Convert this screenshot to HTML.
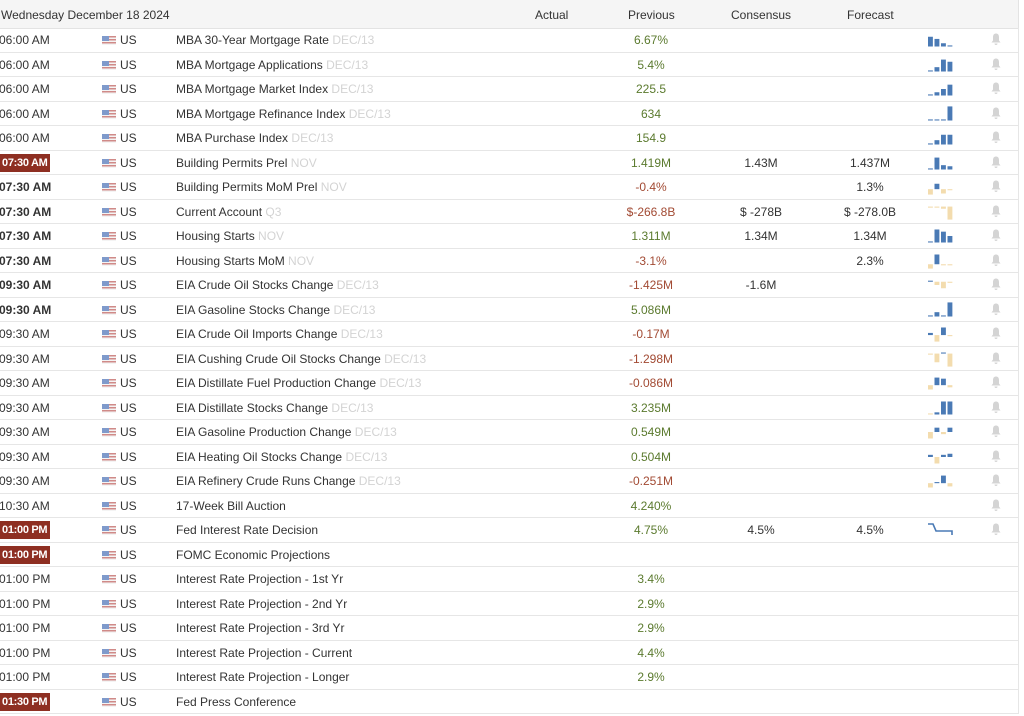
<!DOCTYPE html>
<html><head><meta charset="utf-8"><style>
*{margin:0;padding:0;box-sizing:border-box}
body{width:1024px;height:716px;background:#fff;font-family:"Liberation Sans",Arial,sans-serif;font-size:12px;color:#333;overflow:hidden;position:relative}
.hd{position:absolute;left:0;top:0;width:1019px;height:29px;background:#f5f5f5;border-bottom:1px solid #e3e3e3;border-right:1px solid #e3e3e3}
.hd span{position:absolute;top:8px;font-size:12px;color:#333}
.r{position:absolute;left:0;width:1019px;height:24.5px;border-bottom:1px solid #e6e6e6;border-right:1px solid #e6e6e6}
.r>*{position:absolute;top:5px;white-space:nowrap}
.t{left:-1px}
.b{font-weight:bold}
.bd{left:0;top:3px!important;width:50px;height:18px;background:#8e2f22;color:#fff;font-weight:bold;padding:3px 0 0 2px;font-size:11px;letter-spacing:-0.3px;overflow:hidden}
.f{left:102px;top:8px!important;width:14px;height:9px;background:linear-gradient(#d08a88 0 1.5px,#f4f4f4 1.5px 3px,#d08a88 3px 4.5px,#f4f4f4 4.5px 6px,#d08a88 6px 7.5px,#f4f4f4 7.5px 9px)}
.f:before{content:"";position:absolute;left:0;top:0;width:7px;height:5px;background:#7f9acb}
.us{left:120px}
.ev{left:176px}
.ev i{font-style:normal;color:#d3d3d3}
.c{transform:translateX(-50%)}
.p{left:651px}.cn{left:761px}.fc{left:870px}
.g{color:#5b7a2e}.n{color:#a24a33}
svg.ch{position:absolute;left:928px;top:1px}
.bell{left:990px;top:4px!important;width:12px;height:14px}
</style></head><body>
<div class="hd"><span style="left:1px">Wednesday December 18 2024</span><span style="left:535px">Actual</span><span style="left:628px">Previous</span><span style="left:731px">Consensus</span><span style="left:847px">Forecast</span></div>

<div class="r" style="top:28px"><span class="t">06:00 AM</span><span class="f"></span><span class="us">US</span><span class="ev">MBA 30-Year Mortgage Rate <i>DEC/13</i></span><span class="p c g">6.67%</span><svg class="ch" width="26" height="22" viewBox="0 0 24 20"><rect x="0" y="7" width="4.5" height="9" fill="#4a7ab5"/><rect x="6" y="9" width="4.5" height="7" fill="#4a7ab5"/><rect x="12" y="13" width="4.5" height="3" fill="#4a7ab5"/><rect x="18" y="15" width="4.5" height="1" fill="#4a7ab5"/></svg><svg class="bell" viewBox="0 0 12 13"><path d="M6 1C3.5 1 3 3 3 5v3L1.5 10h9L9 8V5C9 3 8.5 1 6 1zM4.5 11a1.5 1.5 0 003 0z" fill="#d4d4d4"/></svg></div>
<div class="r" style="top:52.5px"><span class="t">06:00 AM</span><span class="f"></span><span class="us">US</span><span class="ev">MBA Mortgage Applications <i>DEC/13</i></span><span class="p c g">5.4%</span><svg class="ch" width="26" height="22" viewBox="0 0 24 20"><rect x="0" y="15" width="4.5" height="1" fill="#4a7ab5"/><rect x="6" y="12" width="4.5" height="4" fill="#4a7ab5"/><rect x="12" y="5" width="4.5" height="11" fill="#4a7ab5"/><rect x="18" y="7" width="4.5" height="9" fill="#4a7ab5"/></svg><svg class="bell" viewBox="0 0 12 13"><path d="M6 1C3.5 1 3 3 3 5v3L1.5 10h9L9 8V5C9 3 8.5 1 6 1zM4.5 11a1.5 1.5 0 003 0z" fill="#d4d4d4"/></svg></div>
<div class="r" style="top:77px"><span class="t">06:00 AM</span><span class="f"></span><span class="us">US</span><span class="ev">MBA Mortgage Market Index <i>DEC/13</i></span><span class="p c g">225.5</span><svg class="ch" width="26" height="22" viewBox="0 0 24 20"><rect x="0" y="15" width="4.5" height="1" fill="#4a7ab5"/><rect x="6" y="13" width="4.5" height="3" fill="#4a7ab5"/><rect x="12" y="10" width="4.5" height="6" fill="#4a7ab5"/><rect x="18" y="6" width="4.5" height="10" fill="#4a7ab5"/></svg><svg class="bell" viewBox="0 0 12 13"><path d="M6 1C3.5 1 3 3 3 5v3L1.5 10h9L9 8V5C9 3 8.5 1 6 1zM4.5 11a1.5 1.5 0 003 0z" fill="#d4d4d4"/></svg></div>
<div class="r" style="top:101.5px"><span class="t">06:00 AM</span><span class="f"></span><span class="us">US</span><span class="ev">MBA Mortgage Refinance Index <i>DEC/13</i></span><span class="p c g">634</span><svg class="ch" width="26" height="22" viewBox="0 0 24 20"><rect x="0" y="15" width="4.5" height="1" fill="#4a7ab5"/><rect x="6" y="15" width="4.5" height="1" fill="#4a7ab5"/><rect x="12" y="15" width="4.5" height="1" fill="#4a7ab5"/><rect x="18" y="3" width="4.5" height="13" fill="#4a7ab5"/></svg><svg class="bell" viewBox="0 0 12 13"><path d="M6 1C3.5 1 3 3 3 5v3L1.5 10h9L9 8V5C9 3 8.5 1 6 1zM4.5 11a1.5 1.5 0 003 0z" fill="#d4d4d4"/></svg></div>
<div class="r" style="top:126px"><span class="t">06:00 AM</span><span class="f"></span><span class="us">US</span><span class="ev">MBA Purchase Index <i>DEC/13</i></span><span class="p c g">154.9</span><svg class="ch" width="26" height="22" viewBox="0 0 24 20"><rect x="0" y="15" width="4.5" height="1" fill="#4a7ab5"/><rect x="6" y="12" width="4.5" height="4" fill="#4a7ab5"/><rect x="12" y="7" width="4.5" height="9" fill="#4a7ab5"/><rect x="18" y="7" width="4.5" height="9" fill="#4a7ab5"/></svg><svg class="bell" viewBox="0 0 12 13"><path d="M6 1C3.5 1 3 3 3 5v3L1.5 10h9L9 8V5C9 3 8.5 1 6 1zM4.5 11a1.5 1.5 0 003 0z" fill="#d4d4d4"/></svg></div>
<div class="r" style="top:150.5px"><span class="bd">07:30 AM</span><span class="f"></span><span class="us">US</span><span class="ev">Building Permits Prel <i>NOV</i></span><span class="p c g">1.419M</span><span class="cn c">1.43M</span><span class="fc c">1.437M</span><svg class="ch" width="26" height="22" viewBox="0 0 24 20"><rect x="0" y="15" width="4.5" height="1" fill="#4a7ab5"/><rect x="6" y="5" width="4.5" height="11" fill="#4a7ab5"/><rect x="12" y="12" width="4.5" height="4" fill="#4a7ab5"/><rect x="18" y="13" width="4.5" height="3" fill="#4a7ab5"/></svg><svg class="bell" viewBox="0 0 12 13"><path d="M6 1C3.5 1 3 3 3 5v3L1.5 10h9L9 8V5C9 3 8.5 1 6 1zM4.5 11a1.5 1.5 0 003 0z" fill="#d4d4d4"/></svg></div>
<div class="r" style="top:175px"><span class="t b">07:30 AM</span><span class="f"></span><span class="us">US</span><span class="ev">Building Permits MoM Prel <i>NOV</i></span><span class="p c n">-0.4%</span><span class="fc c">1.3%</span><svg class="ch" width="26" height="22" viewBox="0 0 24 20"><rect x="0" y="12" width="4.5" height="5" fill="#f3dcae"/><rect x="6" y="7" width="4.5" height="5" fill="#4a7ab5"/><rect x="12" y="12" width="4.5" height="4" fill="#f3dcae"/><rect x="18" y="12" width="4.5" height="1" fill="#f3dcae"/></svg><svg class="bell" viewBox="0 0 12 13"><path d="M6 1C3.5 1 3 3 3 5v3L1.5 10h9L9 8V5C9 3 8.5 1 6 1zM4.5 11a1.5 1.5 0 003 0z" fill="#d4d4d4"/></svg></div>
<div class="r" style="top:199.5px"><span class="t b">07:30 AM</span><span class="f"></span><span class="us">US</span><span class="ev">Current Account <i>Q3</i></span><span class="p c n">$-266.8B</span><span class="cn c">$ -278B</span><span class="fc c">$ -278.0B</span><svg class="ch" width="26" height="22" viewBox="0 0 24 20"><rect x="0" y="5" width="4.5" height="1" fill="#f3dcae"/><rect x="6" y="5" width="4.5" height="1" fill="#f3dcae"/><rect x="12" y="5" width="4.5" height="2" fill="#f3dcae"/><rect x="18" y="5" width="4.5" height="12" fill="#f3dcae"/></svg><svg class="bell" viewBox="0 0 12 13"><path d="M6 1C3.5 1 3 3 3 5v3L1.5 10h9L9 8V5C9 3 8.5 1 6 1zM4.5 11a1.5 1.5 0 003 0z" fill="#d4d4d4"/></svg></div>
<div class="r" style="top:224px"><span class="t b">07:30 AM</span><span class="f"></span><span class="us">US</span><span class="ev">Housing Starts <i>NOV</i></span><span class="p c g">1.311M</span><span class="cn c">1.34M</span><span class="fc c">1.34M</span><svg class="ch" width="26" height="22" viewBox="0 0 24 20"><rect x="0" y="15" width="4.5" height="1" fill="#4a7ab5"/><rect x="6" y="4" width="4.5" height="12" fill="#4a7ab5"/><rect x="12" y="6" width="4.5" height="10" fill="#4a7ab5"/><rect x="18" y="10" width="4.5" height="6" fill="#4a7ab5"/></svg><svg class="bell" viewBox="0 0 12 13"><path d="M6 1C3.5 1 3 3 3 5v3L1.5 10h9L9 8V5C9 3 8.5 1 6 1zM4.5 11a1.5 1.5 0 003 0z" fill="#d4d4d4"/></svg></div>
<div class="r" style="top:248.5px"><span class="t b">07:30 AM</span><span class="f"></span><span class="us">US</span><span class="ev">Housing Starts MoM <i>NOV</i></span><span class="p c n">-3.1%</span><span class="fc c">2.3%</span><svg class="ch" width="26" height="22" viewBox="0 0 24 20"><rect x="0" y="13" width="4.5" height="4" fill="#f3dcae"/><rect x="6" y="4" width="4.5" height="9" fill="#4a7ab5"/><rect x="12" y="13" width="4.5" height="1" fill="#f3dcae"/><rect x="18" y="13" width="4.5" height="1" fill="#f3dcae"/></svg><svg class="bell" viewBox="0 0 12 13"><path d="M6 1C3.5 1 3 3 3 5v3L1.5 10h9L9 8V5C9 3 8.5 1 6 1zM4.5 11a1.5 1.5 0 003 0z" fill="#d4d4d4"/></svg></div>
<div class="r" style="top:273px"><span class="t b">09:30 AM</span><span class="f"></span><span class="us">US</span><span class="ev">EIA Crude Oil Stocks Change <i>DEC/13</i></span><span class="p c n">-1.425M</span><span class="cn c">-1.6M</span><svg class="ch" width="26" height="22" viewBox="0 0 24 20"><rect x="0" y="6" width="4.5" height="1" fill="#4a7ab5"/><rect x="6" y="7" width="4.5" height="3" fill="#f3dcae"/><rect x="12" y="7" width="4.5" height="6" fill="#f3dcae"/><rect x="18" y="7" width="4.5" height="1" fill="#f3dcae"/></svg><svg class="bell" viewBox="0 0 12 13"><path d="M6 1C3.5 1 3 3 3 5v3L1.5 10h9L9 8V5C9 3 8.5 1 6 1zM4.5 11a1.5 1.5 0 003 0z" fill="#d4d4d4"/></svg></div>
<div class="r" style="top:297.5px"><span class="t b">09:30 AM</span><span class="f"></span><span class="us">US</span><span class="ev">EIA Gasoline Stocks Change <i>DEC/13</i></span><span class="p c g">5.086M</span><svg class="ch" width="26" height="22" viewBox="0 0 24 20"><rect x="0" y="15" width="4.5" height="1" fill="#4a7ab5"/><rect x="6" y="12" width="4.5" height="4" fill="#4a7ab5"/><rect x="12" y="15" width="4.5" height="1" fill="#4a7ab5"/><rect x="18" y="3" width="4.5" height="13" fill="#4a7ab5"/></svg><svg class="bell" viewBox="0 0 12 13"><path d="M6 1C3.5 1 3 3 3 5v3L1.5 10h9L9 8V5C9 3 8.5 1 6 1zM4.5 11a1.5 1.5 0 003 0z" fill="#d4d4d4"/></svg></div>
<div class="r" style="top:322px"><span class="t">09:30 AM</span><span class="f"></span><span class="us">US</span><span class="ev">EIA Crude Oil Imports Change <i>DEC/13</i></span><span class="p c n">-0.17M</span><svg class="ch" width="26" height="22" viewBox="0 0 24 20"><rect x="0" y="9" width="4.5" height="2" fill="#4a7ab5"/><rect x="6" y="11" width="4.5" height="6" fill="#f3dcae"/><rect x="12" y="4" width="4.5" height="7" fill="#4a7ab5"/><rect x="18" y="11" width="4.5" height="1" fill="#f3dcae"/></svg><svg class="bell" viewBox="0 0 12 13"><path d="M6 1C3.5 1 3 3 3 5v3L1.5 10h9L9 8V5C9 3 8.5 1 6 1zM4.5 11a1.5 1.5 0 003 0z" fill="#d4d4d4"/></svg></div>
<div class="r" style="top:346.5px"><span class="t">09:30 AM</span><span class="f"></span><span class="us">US</span><span class="ev">EIA Cushing Crude Oil Stocks Change <i>DEC/13</i></span><span class="p c n">-1.298M</span><svg class="ch" width="26" height="22" viewBox="0 0 24 20"><rect x="0" y="5" width="4.5" height="1" fill="#f3dcae"/><rect x="6" y="5" width="4.5" height="8" fill="#f3dcae"/><rect x="12" y="4" width="4.5" height="1" fill="#4a7ab5"/><rect x="18" y="5" width="4.5" height="12" fill="#f3dcae"/></svg><svg class="bell" viewBox="0 0 12 13"><path d="M6 1C3.5 1 3 3 3 5v3L1.5 10h9L9 8V5C9 3 8.5 1 6 1zM4.5 11a1.5 1.5 0 003 0z" fill="#d4d4d4"/></svg></div>
<div class="r" style="top:371px"><span class="t">09:30 AM</span><span class="f"></span><span class="us">US</span><span class="ev">EIA Distillate Fuel Production Change <i>DEC/13</i></span><span class="p c n">-0.086M</span><svg class="ch" width="26" height="22" viewBox="0 0 24 20"><rect x="0" y="12" width="4.5" height="4" fill="#f3dcae"/><rect x="6" y="5" width="4.5" height="7" fill="#4a7ab5"/><rect x="12" y="6" width="4.5" height="6" fill="#4a7ab5"/><rect x="18" y="12" width="4.5" height="2" fill="#f3dcae"/></svg><svg class="bell" viewBox="0 0 12 13"><path d="M6 1C3.5 1 3 3 3 5v3L1.5 10h9L9 8V5C9 3 8.5 1 6 1zM4.5 11a1.5 1.5 0 003 0z" fill="#d4d4d4"/></svg></div>
<div class="r" style="top:395.5px"><span class="t">09:30 AM</span><span class="f"></span><span class="us">US</span><span class="ev">EIA Distillate Stocks Change <i>DEC/13</i></span><span class="p c g">3.235M</span><svg class="ch" width="26" height="22" viewBox="0 0 24 20"><rect x="0" y="15" width="4.5" height="1" fill="#f3dcae"/><rect x="6" y="14" width="4.5" height="2" fill="#4a7ab5"/><rect x="12" y="4" width="4.5" height="12" fill="#4a7ab5"/><rect x="18" y="4" width="4.5" height="12" fill="#4a7ab5"/></svg><svg class="bell" viewBox="0 0 12 13"><path d="M6 1C3.5 1 3 3 3 5v3L1.5 10h9L9 8V5C9 3 8.5 1 6 1zM4.5 11a1.5 1.5 0 003 0z" fill="#d4d4d4"/></svg></div>
<div class="r" style="top:420px"><span class="t">09:30 AM</span><span class="f"></span><span class="us">US</span><span class="ev">EIA Gasoline Production Change <i>DEC/13</i></span><span class="p c g">0.549M</span><svg class="ch" width="26" height="22" viewBox="0 0 24 20"><rect x="0" y="10" width="4.5" height="6" fill="#f3dcae"/><rect x="6" y="6" width="4.5" height="4" fill="#4a7ab5"/><rect x="12" y="10" width="4.5" height="2" fill="#f3dcae"/><rect x="18" y="6" width="4.5" height="4" fill="#4a7ab5"/></svg><svg class="bell" viewBox="0 0 12 13"><path d="M6 1C3.5 1 3 3 3 5v3L1.5 10h9L9 8V5C9 3 8.5 1 6 1zM4.5 11a1.5 1.5 0 003 0z" fill="#d4d4d4"/></svg></div>
<div class="r" style="top:444.5px"><span class="t">09:30 AM</span><span class="f"></span><span class="us">US</span><span class="ev">EIA Heating Oil Stocks Change <i>DEC/13</i></span><span class="p c g">0.504M</span><svg class="ch" width="26" height="22" viewBox="0 0 24 20"><rect x="0" y="8" width="4.5" height="2" fill="#4a7ab5"/><rect x="6" y="10" width="4.5" height="6" fill="#f3dcae"/><rect x="12" y="8" width="4.5" height="2" fill="#4a7ab5"/><rect x="18" y="7" width="4.5" height="3" fill="#4a7ab5"/></svg><svg class="bell" viewBox="0 0 12 13"><path d="M6 1C3.5 1 3 3 3 5v3L1.5 10h9L9 8V5C9 3 8.5 1 6 1zM4.5 11a1.5 1.5 0 003 0z" fill="#d4d4d4"/></svg></div>
<div class="r" style="top:469px"><span class="t">09:30 AM</span><span class="f"></span><span class="us">US</span><span class="ev">EIA Refinery Crude Runs Change <i>DEC/13</i></span><span class="p c n">-0.251M</span><svg class="ch" width="26" height="22" viewBox="0 0 24 20"><rect x="0" y="12" width="4.5" height="4" fill="#f3dcae"/><rect x="6" y="11" width="4.5" height="1" fill="#4a7ab5"/><rect x="12" y="5" width="4.5" height="7" fill="#4a7ab5"/><rect x="18" y="12" width="4.5" height="3" fill="#f3dcae"/></svg><svg class="bell" viewBox="0 0 12 13"><path d="M6 1C3.5 1 3 3 3 5v3L1.5 10h9L9 8V5C9 3 8.5 1 6 1zM4.5 11a1.5 1.5 0 003 0z" fill="#d4d4d4"/></svg></div>
<div class="r" style="top:493.5px"><span class="t">10:30 AM</span><span class="f"></span><span class="us">US</span><span class="ev">17-Week Bill Auction</span><span class="p c g">4.240%</span><svg class="bell" viewBox="0 0 12 13"><path d="M6 1C3.5 1 3 3 3 5v3L1.5 10h9L9 8V5C9 3 8.5 1 6 1zM4.5 11a1.5 1.5 0 003 0z" fill="#d4d4d4"/></svg></div>
<div class="r" style="top:518px"><span class="bd">01:00 PM</span><span class="f"></span><span class="us">US</span><span class="ev">Fed Interest Rate Decision</span><span class="p c g">4.75%</span><span class="cn c">4.5%</span><span class="fc c">4.5%</span><svg class="ch" width="28" height="20"><path d="M0 5H5L8 12H24V16" fill="none" stroke="#4a7ab5" stroke-width="1.6"/></svg><svg class="bell" viewBox="0 0 12 13"><path d="M6 1C3.5 1 3 3 3 5v3L1.5 10h9L9 8V5C9 3 8.5 1 6 1zM4.5 11a1.5 1.5 0 003 0z" fill="#d4d4d4"/></svg></div>
<div class="r" style="top:542.5px"><span class="bd">01:00 PM</span><span class="f"></span><span class="us">US</span><span class="ev">FOMC Economic Projections</span></div>
<div class="r" style="top:567px"><span class="t">01:00 PM</span><span class="f"></span><span class="us">US</span><span class="ev">Interest Rate Projection - 1st Yr</span><span class="p c g">3.4%</span></div>
<div class="r" style="top:591.5px"><span class="t">01:00 PM</span><span class="f"></span><span class="us">US</span><span class="ev">Interest Rate Projection - 2nd Yr</span><span class="p c g">2.9%</span></div>
<div class="r" style="top:616px"><span class="t">01:00 PM</span><span class="f"></span><span class="us">US</span><span class="ev">Interest Rate Projection - 3rd Yr</span><span class="p c g">2.9%</span></div>
<div class="r" style="top:640.5px"><span class="t">01:00 PM</span><span class="f"></span><span class="us">US</span><span class="ev">Interest Rate Projection - Current</span><span class="p c g">4.4%</span></div>
<div class="r" style="top:665px"><span class="t">01:00 PM</span><span class="f"></span><span class="us">US</span><span class="ev">Interest Rate Projection - Longer</span><span class="p c g">2.9%</span></div>
<div class="r" style="top:689.5px"><span class="bd">01:30 PM</span><span class="f"></span><span class="us">US</span><span class="ev">Fed Press Conference</span></div>
</body></html>
